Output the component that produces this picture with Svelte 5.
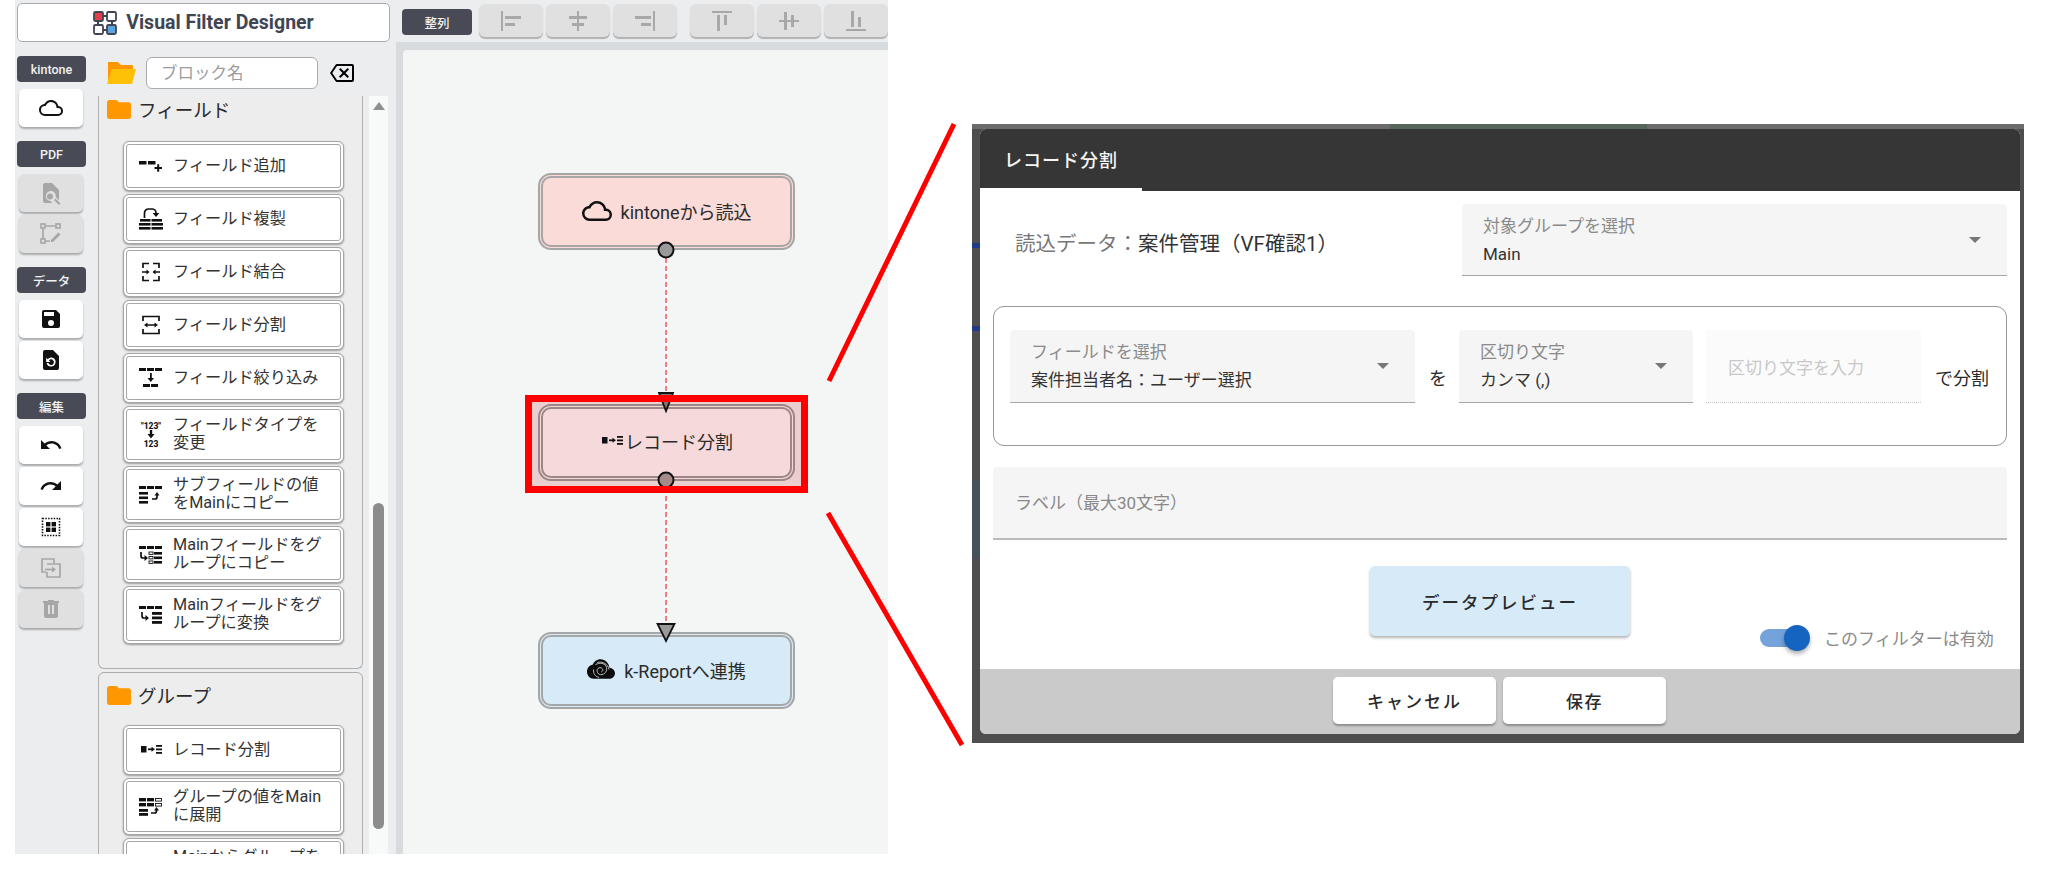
<script>
  const P = {
    cloud: 'M19,18H6A4,4 0 0,1 2,14A4,4 0 0,1 6,10H6.71C7.37,7.69 9.5,6 12,6A5.5,5.5 0 0,1 17.5,11.5V12H19A3,3 0 0,1 22,15A3,3 0 0,1 19,18M19.35,10.03C18.67,6.59 15.64,4 12,4C9.11,4 6.6,5.64 5.35,8.03C2.34,8.36 0,10.9 0,14A6,6 0 0,0 6,20H19A5,5 0 0,0 24,15C24,12.36 21.95,10.22 19.35,10.03Z',
    save: 'M15,9H5V5H15M12,19A3,3 0 0,1 9,16A3,3 0 0,1 12,13A3,3 0 0,1 15,16A3,3 0 0,1 12,19M17,3H5C3.89,3 3,3.9 3,5V19A2,2 0 0,0 5,21H19A2,2 0 0,0 21,19V7L17,3Z',
    undo: 'M12.5,8C9.85,8 7.45,9 5.6,10.6L2,7V16H11L7.38,12.38C8.77,11.22 10.54,10.5 12.5,10.5C16.04,10.5 19.05,12.81 20.1,16L22.47,15.22C21.08,11.03 17.15,8 12.5,8Z',
    redo: 'M18.4,10.6C16.55,9 14.15,8 11.5,8C6.85,8 2.92,11.03 1.54,15.22L3.9,16C4.95,12.81 7.95,10.5 11.5,10.5C13.45,10.5 15.23,11.22 16.62,12.38L13,16H22V7L18.4,10.6Z',
    trash: 'M9,3V4H4V6H5V19A2,2 0 0,0 7,21H17A2,2 0 0,0 19,19V6H20V4H15V3H9M9,8H11V17H9V8M13,8H15V17H13V8Z',
    restore: 'M14,2H6A2,2 0 0,0 4,4V20A2,2 0 0,0 6,22H18A2,2 0 0,0 20,20V8L14,2ZM12,18.5A4.5,4.5 0 0,1 7.6,15H9.4A2.8,2.8 0 1,0 9.9,12.4L11.5,14H7.2V9.7L8.7,11.2A4.5,4.5 0 1,1 12,18.5Z',
    fileSearch: 'M13,2H6A2,2 0 0,0 4,4V20A2,2 0 0,0 6,22H13.2L11.4,20A5,5 0 1,1 16.7,16.1L20,19.3V9L13,2ZM11,12.5A3,3 0 1,0 11,18.5A3,3 0 1,0 11,12.5ZM16.5,17.5L21.5,22.5L20,24L15,19Z',
    backspace: 'M19,15.59L17.59,17L14,13.41L10.41,17L9,15.59L12.59,12L9,8.41L10.41,7L14,10.59L17.59,7L19,8.41L15.41,12L19,15.59M22,3A2,2 0 0,1 24,5V19A2,2 0 0,1 22,21H7C6.31,21 5.77,20.64 5.41,20.11L0,12L5.41,3.88C5.77,3.35 6.31,3 7,3H22M22,5H7L2.28,12L7,19H22V5Z',
    alLeft: 'M4 22H2V2H4V22M22 7H6V10H22V7M16 14H6V17H16V14Z',
    alCenter: 'M11 2H13V7H21V10H13V14H18V17H13V22H11V17H6V14H11V10H3V7H11V2Z',
    alRight: 'M20 2H22V22H20V2M2 10H18V7H2V10M8 17H18V14H8V17Z',
    alTop: 'M22 2V4H2V2H22M7 22H10V6H7V22M14 16H17V6H14V16Z',
    alMid: 'M2 11H7V3H10V11H14V6H17V11H22V13H17V18H14V13H10V21H7V13H2V11Z',
    alBottom: 'M22 22H2V20H22V22M10 2H7V18H10V2M17 8H14V18H17V8Z',
    folder: 'M10,4H4C2.89,4 2,4.89 2,6V18A2,2 0 0,0 4,20H20A2,2 0 0,0 22,18V8C22,6.89 21.1,6 20,6H12L10,4Z'
  };

  const G = {
    add: { r: [[0,7,7.5,3.5],[9,7,7.5,3.5],[15.5,13,7.5,2],[18.2,10.2,2,7.5]] },
    dup: { r: [[1,12,10.5,2.6],[12.5,12,10.5,2.6],[0,16,11.5,2.6],[12.5,16,11.5,2.6],[0,20,11.5,2.6],[12.5,20,11.5,2.6]], s: 'M5.5,11V6A4,4 0 0,1 9.5,2H13A4,4 0 0,1 17,6V7', f: 'M13.6,6H20.4L17,10Z' },
    merge: { s: 'M4,8V3.5H10M14,3.5H20V8M4,16V20.5H10M14,20.5H20V16M3,12H9M21,12H15', f: 'M10.5,12L7.5,9.5V14.5ZM13.5,12L16.5,9.5V14.5Z' },
    split: { s: 'M4,8V3.5H20V8M4,16V20.5H20V16M7,12H17', f: 'M5,12L8.5,9.5V14.5ZM19,12L15.5,9.5V14.5Z' },
    filter: { r: [[0,2,7,3],[8,2,7,3],[16,2,7,3],[4,18,7,3],[12,18,7,3],[11,7,1.8,6]], f: 'M8.5,12H15L11.8,16Z' },
    subcopy: { r: [[0,3,7,3],[8,3,7,3],[16,3,7,3],[0,9,9,2.6],[0,13.5,9,2.6],[0,18,9,2.6]], s: 'M13,16H16A2,2 0 0,0 18,14V12', f: 'M15.5,12.5H20.5L18,9Z' },
    maincopy: { r: [[0,3,7,3],[8,3,7,3],[16,3,7,3],[15,9,8,2.6],[15,13.5,8,2.6],[15,18,8,2.6]], o: [[10,9,4,2.4],[10,13.5,4,2.4],[10,18,4,2.4]], s: 'M2,9V13A2,2 0 0,0 4,15H6', f: 'M5.5,12V18L9,15Z' },
    mainconv: { r: [[0,3,7,3],[8,3,7,3],[16,3,7,3],[13,9,10,2.8],[13,13.5,10,2.8],[13,18,10,2.8]], s: 'M3,9V13A2,2 0 0,0 5,15H7', f: 'M6.5,12V18L10,15Z' },
    record: { r: [[2,8,5.5,6.5],[17,7,6,1.8],[17,10.5,6,1.8],[17,14,6,1.8],[9,10.4,4,1.8]], f: 'M12.5,8.8L16,11.3L12.5,13.8Z' },
    expand: { r: [[0,3,7,3.4],[8,3,7,3.4],[0,8,7,3.4],[8,8,7,3.4],[0,14,9,2.8],[0,18,9,2.8]], o: [[16.5,3.5,6,2.6],[16.5,8.5,6,2.6]], s: 'M12,18H15.5A2,2 0 0,0 17.5,16V15', f: 'M15,15.5H20L17.5,12Z' }
  };

  const fields = [
    { icon: 'add', text: 'フィールド追加' },
    { icon: 'dup', text: 'フィールド複製' },
    { icon: 'merge', text: 'フィールド結合' },
    { icon: 'split', text: 'フィールド分割' },
    { icon: 'filter', text: 'フィールド絞り込み' },
    { icon: 'type', text: 'フィールドタイプを変更', two: true },
    { icon: 'subcopy', text: 'サブフィールドの値をMainにコピー', two: true },
    { icon: 'maincopy', text: 'Mainフィールドをグループにコピー', two: true },
    { icon: 'mainconv', text: 'Mainフィールドをグループに変換', two: true, last: true }
  ];
  const groups = [
    { icon: 'record', text: 'レコード分割' },
    { icon: 'expand', text: 'グループの値をMainに展開', two: true },
    { icon: 'maincopy', text: 'Mainからグループを作成', two: true }
  ];
  const rail = [
    { tag: 'kintone', btns: [{ kind: 'cloud' }] },
    { tag: 'PDF', btns: [{ kind: 'fileSearch', off: true }, { kind: 'polyline', off: true }] },
    { tag: 'データ', btns: [{ kind: 'save' }, { kind: 'restore' }] },
    { tag: '編集', btns: [{ kind: 'undo' }, { kind: 'redo' }, { kind: 'selectAll' }, { kind: 'duplicate', off: true }, { kind: 'trash', off: true }] }
  ];
  const alignA = ['alLeft', 'alCenter', 'alRight'];
  const alignB = ['alTop', 'alMid', 'alBottom'];
</script>

{#snippet glyph(kind)}
  <svg class="glyph" viewBox="0 0 24 24" aria-hidden="true">
    {#if kind === 'type'}
      <text class="num" x="12" y="5.5" text-anchor="middle">"123"</text>
      <rect x="10.8" y="7" width="2.4" height="5" />
      <path d="M8.5,11H15.5L12,15.5Z" />
      <text class="num" x="12" y="24" text-anchor="middle">123</text>
    {:else}
      {#each G[kind].r ?? [] as r}
        <rect x={r[0]} y={r[1]} width={r[2]} height={r[3]} />
      {/each}
      {#each G[kind].o ?? [] as r}
        <rect class="hollow" x={r[0]} y={r[1]} width={r[2]} height={r[3]} />
      {/each}
      {#if G[kind].s}<path class="line" d={G[kind].s} />{/if}
      {#if G[kind].f}<path d={G[kind].f} />{/if}
    {/if}
  </svg>
{/snippet}

{#snippet railIcon(kind)}
  <svg class="rail-icon" viewBox="0 0 24 24" aria-hidden="true">
    {#if kind === 'polyline'}
      <rect class="hollow" x="2" y="2" width="4" height="4" />
      <rect class="hollow" x="17" y="2" width="4" height="4" />
      <rect class="hollow" x="2" y="17" width="4" height="4" />
      <path class="line" d="M6,4H17M4,6V17M6,19H11" />
      <path d="M19.5,10.5L21.5,12.5L14,20H12V18Z" />
    {:else if kind === 'selectAll'}
      <rect class="dots" x="3.5" y="3.5" width="17" height="17" />
      <rect x="7" y="7" width="4.4" height="4.4" />
      <rect x="12.6" y="7" width="4.4" height="4.4" />
      <rect x="7" y="12.6" width="4.4" height="4.4" />
      <rect x="12.6" y="12.6" width="4.4" height="4.4" />
    {:else if kind === 'duplicate'}
      <path class="line" d="M15,7V3H3V16H7" />
      <path class="line" d="M8,8H21V21H8V16" />
      <path class="line" d="M6,13.5H14" />
      <path d="M13,10.5L17,13.5L13,16.5Z" />
    {:else}
      <path d={P[kind]} />
    {/if}
  </svg>
{/snippet}

{#snippet item(it)}
  <button class="item" class:two={it.two} class:last={it.last}>
    <span class="item-icon">{@render glyph(it.icon)}</span>
    <span class="item-text">{it.text}</span>
  </button>
{/snippet}

<div class="page">
  <div class="app">
    <aside class="left">
      <header class="brand">
        <svg class="logo" viewBox="0 0 24 24" aria-hidden="true">
          <path class="logo-link" d="M9,5H15M5,9V15M19,9V15M9,19H15" />
          <rect class="logo-red" x="1" y="1" width="9" height="9" rx="1.4" />
          <rect class="logo-box" x="14" y="1" width="9" height="9" rx="1.4" />
          <rect class="logo-box" x="1" y="14" width="9" height="9" rx="1.4" />
          <rect class="logo-blue" x="14" y="14" width="9" height="9" rx="1.4" />
        </svg>
        <span>Visual Filter Designer</span>
      </header>

      <div class="left-body">
        <nav class="rail">
          {#each rail as g}
            <div class="rail-group">
              <div class="tag">{g.tag}</div>
              <div class="rail-btns">
                {#each g.btns as b}
                  <button class="rail-btn" class:off={b.off}>{@render railIcon(b.kind)}</button>
                {/each}
              </div>
            </div>
          {/each}
        </nav>

        <section class="blocks">
          <div class="search">
            <svg class="folder-open" viewBox="0 0 29 24" aria-hidden="true">
              <path class="fo-back" d="M1,1H11L14,4H25A1,1 0 0,1 26,5V9H5L1,22Z" />
              <path class="fo-front" d="M5,8H29L25,23H0Z" />
            </svg>
            <input class="search-input" placeholder="ブロック名" />
            <svg class="clear" viewBox="0 0 24 24" aria-hidden="true"><path d={P.backspace} /></svg>
          </div>

          <div class="scroller">
            <div class="list">
              <div class="group first">
                <div class="group-head">
                  <svg class="folder" viewBox="2 4 20 16" aria-hidden="true"><path d={P.folder} /></svg>
                  <span>フィールド</span>
                </div>
                <div class="items">
                  {#each fields as it}{@render item(it)}{/each}
                </div>
              </div>
              <div class="group second">
                <div class="group-head">
                  <svg class="folder" viewBox="2 4 20 16" aria-hidden="true"><path d={P.folder} /></svg>
                  <span>グループ</span>
                </div>
                <div class="items">
                  {#each groups as it}{@render item(it)}{/each}
                </div>
              </div>
            </div>
            <div class="scrollbar">
              <span class="sb-arrow"></span>
              <span class="sb-thumb"></span>
            </div>
          </div>
        </section>
      </div>
    </aside>

    <main class="right">
      <div class="toolbar">
        <div class="tag tag-wide">整列</div>
        <div class="tool-group">
          {#each alignA as k}<button class="tool"><svg viewBox="0 0 24 24" aria-hidden="true"><path d={P[k]} /></svg></button>{/each}
        </div>
        <div class="tool-group">
          {#each alignB as k}<button class="tool"><svg viewBox="0 0 24 24" aria-hidden="true"><path d={P[k]} /></svg></button>{/each}
        </div>
      </div>

      <div class="canvas-wrap">
        <div class="canvas">
          <div class="node pink n1">
            <svg class="node-icon" viewBox="0 0 24 24" aria-hidden="true"><path d={P.cloud} /></svg>
            <span>kintoneから読込</span>
          </div>

          <div class="mark"></div>
          <div class="node pink2 n2">
            <span class="node-glyph">{@render glyph('record')}</span>
            <span>レコード分割</span>
          </div>

          <div class="node blue n3">
            <svg class="kr" viewBox="0 0 30 24" aria-hidden="true">
              <path d="M24,10C23.5,5 19.5,1 14.5,1C10.5,1 7.5,3.5 6,7C2.5,7.5 0,10.5 0,14.5C0,18.5 3,22 7,22H24C27.5,22 30,19 30,16C30,13 27.5,10.3 24,10Z" />
              <path class="kr-swirl" d="M9,7C13,4 20,5 21,10C22,15 17,19 13,17C9.5,15 10.5,10 14,10C17,10 18,13.5 15.5,14.5M7,12C6.5,16 9,20 13,20.5M11,4.5C16,3 23,6 23.5,12" />
            </svg>
            <span>k-Reportへ連携</span>
          </div>

          <svg class="links" viewBox="0 0 485 804" aria-hidden="true">
            <path class="dash" d="M263,208V346M263,438V575" />
            <circle class="dot" cx="263" cy="200" r="7.5" />
            <path class="tri tri-mark" d="M256,343H270L263,361Z" />
            <circle class="dot dot-mark" cx="263" cy="430" r="7.5" />
            <path class="tri" d="M254.5,574H271.5L263,591Z" />
          </svg>
          <div class="mark-frame"></div>
        </div>
      </div>
    </main>
  </div>

  <section class="shot">
    <span class="scrap s1"></span>
    <span class="scrap s2"></span>
    <span class="scrap s3"></span>
    <span class="scrap s4"></span>
    <div class="dialog">
      <div class="dlg-head"><div class="dlg-tab">レコード分割</div></div>
      <div class="dlg-body">
        <div class="row-read">
          <div class="read"><span class="muted">読込データ：</span>案件管理（VF確認1）</div>
          <div class="field wide">
            <div class="f-label">対象グループを選択</div>
            <div class="f-value">Main</div>
            <span class="caret"></span>
          </div>
        </div>

        <div class="split-box">
          <div class="field f-name">
            <div class="f-label">フィールドを選択</div>
            <div class="f-value">案件担当者名：ユーザー選択</div>
            <span class="caret"></span>
          </div>
          <span class="joint wo">を</span>
          <div class="field f-sep">
            <div class="f-label">区切り文字</div>
            <div class="f-value">カンマ (,)</div>
            <span class="caret"></span>
          </div>
          <div class="field f-off">区切り文字を入力</div>
          <span class="joint">で分割</span>
        </div>

        <div class="label-field">ラベル（最大30文字）</div>

        <div class="row-preview">
          <button class="preview">データプレビュー</button>
          <div class="switch">
            <span class="track"><span class="thumb"></span></span>
            <span class="switch-text">このフィルターは有効</span>
          </div>
        </div>
      </div>
      <footer class="dlg-foot">
        <button class="foot-btn cancel">キャンセル</button>
        <button class="foot-btn save">保存</button>
      </footer>
    </div>
  </section>

  <svg class="callout" viewBox="0 0 2048 875" aria-hidden="true">
    <path d="M829,381L954,124M828,513L962,745" />
  </svg>
</div>

<style>
  :global(body) {
    margin: 0;
    background: #fff;
  }
  .page {
    position: relative;
    display: flex;
    align-items: flex-start;
    width: 2048px;
    height: 875px;
    overflow: hidden;
    font-family: Roboto, "Noto Sans CJK JP", sans-serif;
    color: #2a2a2a;
  }
  button {
    font-family: inherit;
    padding: 0;
    border: 0;
    cursor: pointer;
  }

  /* application */
  .app {
    display: grid;
    grid-template-columns: 381px 492px;
    width: 873px;
    height: 854px;
    margin-left: 15px;
    background: #ebedef;
    overflow: hidden;
    flex: none;
  }
  .left {
    display: flex;
    flex-direction: column;
    min-height: 0;
  }
  .brand {
    display: flex;
    align-items: center;
    justify-content: center;
    gap: 9px;
    box-sizing: border-box;
    width: 373px;
    height: 39px;
    margin: 3px 0 0 2px;
    background: #fff;
    border: 1px solid #a9abae;
    border-radius: 5px;
    font-size: 19.5px;
    font-weight: 700;
    color: #414552;
  }
  .logo {
    width: 24px;
    height: 24px;
  }
  .logo-link {
    fill: none;
    stroke: #414552;
    stroke-width: 2;
  }
  .logo-box {
    fill: #fff;
    stroke: #414552;
    stroke-width: 1.8;
  }
  .logo-red {
    fill: #e53f4b;
    stroke: #414552;
    stroke-width: 1.8;
  }
  .logo-blue {
    fill: #5aa5e0;
    stroke: #414552;
    stroke-width: 1.8;
  }
  .left-body {
    display: flex;
    flex: 1;
    min-height: 0;
    padding: 14px 0 0 2px;
    gap: 12px;
  }
  .rail {
    display: flex;
    flex-direction: column;
    gap: 14px;
    width: 69px;
    flex: none;
  }
  .rail-group {
    display: flex;
    flex-direction: column;
    gap: 7px;
  }
  .rail-btns {
    display: flex;
    flex-direction: column;
    gap: 3px;
    padding: 0 3px 0 2px;
  }
  .tag {
    display: flex;
    align-items: center;
    justify-content: center;
    height: 26px;
    background: #484a55;
    color: #f2f2f2;
    border-radius: 4px;
    font-size: 12.5px;
    font-weight: 500;
    flex: none;
  }
  .tag-wide {
    width: 70px;
    margin-top: 9px;
  }
  .rail-btn {
    display: flex;
    align-items: center;
    justify-content: center;
    height: 38px;
    background: #fff;
    border-radius: 5px;
    box-shadow: 0 2px 2px rgba(0, 0, 0, 0.28);
    color: #111;
  }
  .rail-btn.off {
    background: #e0e0e0;
    color: #a6a6a6;
  }
  .rail-icon {
    width: 24px;
    height: 24px;
    fill: currentColor;
  }
  .rail-icon .line {
    fill: none;
    stroke: currentColor;
    stroke-width: 1.7;
  }
  .rail-icon .hollow {
    fill: none;
    stroke: currentColor;
    stroke-width: 1.6;
  }
  .rail-icon .dots {
    fill: none;
    stroke: currentColor;
    stroke-width: 1.6;
    stroke-dasharray: 1.5 1.3;
  }

  .blocks {
    display: flex;
    flex-direction: column;
    width: 290px;
    min-height: 0;
    margin-top: 1px;
  }
  .search {
    display: flex;
    align-items: center;
    height: 32px;
    margin-bottom: 7px;
    flex: none;
  }
  .folder-open {
    width: 29px;
    height: 24px;
    margin: 0 10px 0 9px;
    flex: none;
  }
  .fo-back {
    fill: #ff9800;
  }
  .fo-front {
    fill: #ffc107;
  }
  .search-input {
    box-sizing: border-box;
    width: 172px;
    height: 32px;
    padding: 0 14px;
    border: 1px solid #a9abae;
    border-radius: 6px;
    background: #fff;
    font: 16.5px Roboto, "Noto Sans CJK JP", sans-serif;
    outline: none;
  }
  .search-input::placeholder {
    color: #9c9c9c;
    opacity: 1;
  }
  .clear {
    width: 24px;
    height: 24px;
    margin-left: 12px;
  }
  .scroller {
    display: flex;
    flex: 1;
    min-height: 0;
    overflow: hidden;
  }
  .list {
    display: flex;
    flex-direction: column;
    gap: 3px;
    width: 265px;
    flex: none;
  }
  .group {
    box-sizing: border-box;
    background: #ededed;
    border: 1px solid #adadad;
    border-radius: 6px;
    padding: 0 18px 0 24px;
    flex: none;
  }
  .group.first {
    border-top: 0;
    border-radius: 0 0 6px 6px;
    height: 573px;
  }
  .group.second {
    height: 400px;
  }
  .group-head {
    display: flex;
    align-items: center;
    gap: 7px;
    height: 24px;
    margin-left: -16px;
    font-size: 18.5px;
    color: #2a2a2a;
  }
  .first .group-head {
    margin-top: 1px;
    margin-bottom: 20px;
  }
  .second .group-head {
    margin-top: 10px;
    margin-bottom: 18px;
  }
  .folder {
    width: 24px;
    height: 21px;
    fill: #ff9800;
    flex: none;
  }
  .items {
    display: flex;
    flex-direction: column;
    gap: 3px;
  }
  .item {
    display: flex;
    align-items: center;
    box-sizing: border-box;
    width: 221px;
    height: 50px;
    padding: 0 8px 0 12px;
    background: #fff;
    border: 4px double #a6a6a6;
    border-radius: 6px;
    box-shadow: 0 1px 2px rgba(0, 0, 0, 0.35);
    text-align: left;
    color: #333;
    flex: none;
  }
  .item.two {
    height: 57px;
  }
  .item.last {
    height: 58px;
  }
  .item-icon {
    display: flex;
    width: 24px;
    margin-right: 10px;
    flex: none;
  }
  .item-text {
    font-size: 16.2px;
    line-height: 18px;
  }
  .two .item-text {
    margin-top: -2px;
  }
  .glyph {
    width: 24px;
    height: 24px;
    fill: #111;
    overflow: visible;
  }
  .glyph .line {
    fill: none;
    stroke: #111;
    stroke-width: 1.7;
  }
  .glyph .hollow {
    fill: none;
    stroke: #111;
    stroke-width: 0.9;
  }
  .glyph .num {
    font: 800 8.5px Roboto, sans-serif;
    fill: #111;
  }
  .scrollbar {
    display: flex;
    flex-direction: column;
    align-items: center;
    width: 19px;
    margin-left: 6px;
    background: #f8f9f9;
    flex: none;
  }
  .sb-arrow {
    width: 0;
    height: 0;
    margin-top: 6px;
    border-left: 6px solid transparent;
    border-right: 6px solid transparent;
    border-bottom: 8px solid #8f8f8f;
  }
  .sb-thumb {
    width: 11px;
    height: 326px;
    margin-top: 393px;
    background: #8c8c8c;
    border-radius: 6px;
  }

  .right {
    display: flex;
    flex-direction: column;
    min-height: 0;
  }
  .toolbar {
    display: flex;
    align-items: flex-start;
    height: 42px;
    padding-left: 6px;
    flex: none;
  }
  .tool-group {
    display: flex;
    gap: 3px;
    margin: 4px 0 0 7px;
  }
  .tool-group + .tool-group {
    margin-left: 13px;
  }
  .tool {
    display: flex;
    align-items: center;
    justify-content: center;
    width: 64px;
    height: 33px;
    background: #e0e0e0;
    border-radius: 6px;
    box-shadow: 0 2px 1px rgba(0, 0, 0, 0.25);
  }
  .tool svg {
    width: 24px;
    height: 24px;
    fill: #a8a8a8;
  }
  .canvas-wrap {
    flex: 1;
    display: flex;
    min-height: 0;
    padding: 8px 0 0 7px;
    background: #d8dbde;
  }
  .canvas {
    position: relative;
    flex: 1;
    background: #f4f6f6;
    border-radius: 4px 0 0 0;
  }
  .node {
    position: absolute;
    left: 135px;
    box-sizing: border-box;
    display: flex;
    align-items: center;
    justify-content: center;
    width: 257px;
    height: 77px;
    padding-bottom: 2px;
    border: 5px double #a6a6a6;
    border-radius: 13px;
    font-size: 18px;
    color: #2a2a2a;
  }
  .n1 {
    top: 123px;
    gap: 9px;
  }
  .n2 {
    top: 354px;
    gap: 1px;
    padding-bottom: 4px;
  }
  .n3 {
    top: 582px;
    gap: 9px;
  }
  .pink {
    background: #fadbd8;
  }
  .pink2 {
    background: #f6d9da;
    border-color: #9c8686;
  }
  .blue {
    background: #d6eaf8;
  }
  .node-icon {
    width: 30px;
    height: 30px;
    fill: #111;
  }
  .node-glyph {
    display: flex;
  }
  .kr {
    width: 28px;
    height: 23px;
    fill: #0c0c0c;
  }
  .kr-swirl {
    fill: none;
    stroke: #d8d8d8;
    stroke-width: 0.9;
  }
  .mark,
  .mark-frame {
    position: absolute;
    left: 122px;
    top: 345px;
    box-sizing: border-box;
    width: 283px;
    height: 98px;
  }
  .mark {
    background: #ebcfcf;
  }
  .mark-frame {
    border: 7px solid #ff0000;
  }
  .links {
    position: absolute;
    left: 0;
    top: 0;
    width: 485px;
    height: 804px;
    pointer-events: none;
  }
  .dash {
    fill: none;
    stroke: #e8303a;
    stroke-width: 1.2;
    stroke-dasharray: 5 3;
  }
  .dot {
    fill: #999;
    stroke: #111;
    stroke-width: 2;
  }
  .dot-mark {
    fill: #a58a8c;
  }
  .tri {
    fill: #999;
    stroke: #111;
    stroke-width: 1.8;
    stroke-linejoin: miter;
  }
  .tri-mark {
    fill: #87706f;
  }

  /* dialog picture */
  .shot {
    position: relative;
    box-sizing: border-box;
    width: 1052px;
    height: 619px;
    margin: 124px 0 0 84px;
    padding: 5px 4px 9px 8px;
    background: linear-gradient(#6b6b6b 5px, #4e4e4e 5px);
    flex: none;
  }
  .scrap {
    position: absolute;
    left: 0;
    width: 8px;
    height: 5px;
    background: #1f3a8a;
  }
  .s1 {
    top: 119px;
  }
  .s2 {
    top: 202px;
  }
  .s3 {
    left: 418px;
    width: 257px;
    top: 0;
    background: #56655a;
  }
  .s4 {
    top: 356px;
    height: 78px;
    background: #46525a;
  }
  .dialog {
    position: relative;
    display: flex;
    flex-direction: column;
    height: 100%;
    background: #fff;
    border-radius: 6px;
    overflow: hidden;
  }
  .dlg-head {
    height: 62px;
    background: #363636;
    flex: none;
  }
  .dlg-tab {
    box-sizing: border-box;
    width: 162px;
    height: 62px;
    padding-left: 24px;
    line-height: 64px;
    border-bottom: 3px solid #fff;
    color: #f5f5f5;
    font-size: 18px;
    font-weight: 500;
    letter-spacing: 1px;
  }
  .dlg-body {
    flex: 1;
    min-height: 0;
    padding: 13px 13px 0;
  }
  .row-read {
    display: flex;
    align-items: center;
    justify-content: space-between;
  }
  .read {
    padding: 3px 0 0 22px;
    font-size: 20.5px;
    color: #333;
  }
  .muted {
    color: #777;
  }
  .field {
    position: relative;
    box-sizing: border-box;
    height: 73px;
    padding: 10px 21px 0;
    background: #f5f5f5;
    border-bottom: 1px solid #a6a6a6;
    border-radius: 4px 4px 0 0;
    flex: none;
  }
  .wide {
    width: 545px;
    height: 72px;
  }
  .f-label {
    font-size: 17px;
    line-height: 24px;
    color: #8a8a8a;
  }
  .f-value {
    font-size: 17px;
    line-height: 24px;
    margin-top: 4px;
    color: #333;
  }
  .caret {
    position: absolute;
    right: 26px;
    top: 33px;
    width: 0;
    height: 0;
    border-left: 6px solid transparent;
    border-right: 6px solid transparent;
    border-top: 6px solid #777;
  }
  .split-box {
    display: flex;
    align-items: flex-start;
    box-sizing: border-box;
    height: 140px;
    margin-top: 30px;
    padding: 23px 16px;
    border: 1px solid #999;
    border-radius: 11px;
  }
  .f-name {
    width: 405px;
  }
  .f-sep {
    width: 234px;
  }
  .f-off {
    width: 215px;
    margin-left: 13px;
    padding: 24px 0 0 22px;
    background: #fbfbfb;
    border-bottom: 1px dotted #c8c8c8;
    font-size: 17px;
    color: #c8c8c8;
  }
  .joint {
    margin-top: 37px;
    margin-left: 14px;
    font-size: 18px;
    line-height: 24px;
    color: #2a2a2a;
  }
  .wo {
    margin-left: 14px;
    margin-right: 12px;
  }
  .label-field {
    box-sizing: border-box;
    height: 73px;
    margin-top: 21px;
    padding: 24px 22px 0;
    background: #f5f5f5;
    border-bottom: 2px solid #bbb;
    border-radius: 4px 4px 0 0;
    font-size: 17px;
    line-height: 24px;
    color: #888;
  }
  .row-preview {
    display: flex;
    align-items: flex-start;
    padding-left: 377px;
    margin-top: 26px;
  }
  .preview {
    width: 260px;
    height: 70px;
    background: #d6eaf8;
    border-radius: 5px;
    box-shadow: 0 2px 3px rgba(0, 0, 0, 0.3);
    font-size: 17.5px;
    font-weight: 500;
    letter-spacing: 2px;
    color: #2a2a2a;
  }
  .switch {
    display: flex;
    align-items: center;
    gap: 18px;
    margin: 59px 0 0 130px;
  }
  .track {
    position: relative;
    display: block;
    width: 46px;
    height: 18px;
    background: #73a3da;
    border-radius: 9px;
  }
  .thumb {
    position: absolute;
    right: -4px;
    top: -4px;
    width: 26px;
    height: 26px;
    background: #1565c0;
    border-radius: 50%;
    box-shadow: 0 3px 4px rgba(0, 0, 0, 0.3);
  }
  .switch-text {
    font-size: 17px;
    color: #8a8a8a;
  }
  .dlg-foot {
    display: flex;
    align-items: flex-start;
    height: 65px;
    padding: 8px 0 0 353px;
    box-sizing: border-box;
    background: #cacaca;
    flex: none;
  }
  .foot-btn {
    height: 47px;
    background: #fff;
    border-radius: 5px;
    box-shadow: 0 2px 2px rgba(0, 0, 0, 0.3);
    font-size: 17px;
    font-weight: 500;
    color: #2a2a2a;
  }
  .cancel {
    width: 163px;
    letter-spacing: 2px;
  }
  .save {
    width: 163px;
    margin-left: 7px;
    letter-spacing: 1.5px;
  }

  .callout {
    position: absolute;
    inset: 0;
    width: 2048px;
    height: 875px;
    pointer-events: none;
  }
  .callout path {
    fill: none;
    stroke: #ff0000;
    stroke-width: 5;
  }
</style>
